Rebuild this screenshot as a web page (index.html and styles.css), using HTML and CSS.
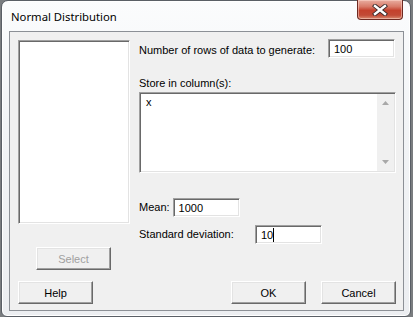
FILE: index.html
```html
<!DOCTYPE html>
<html>
<head>
<meta charset="utf-8">
<link rel="stylesheet" href="styles.css">
</head>
<body>
<div class="window">
  <div class="titlebar">
    <span class="title">Normal Distribution</span>
    <div class="close">
      <svg width="18" height="12" viewBox="0 0 18 12">
        <path d="M4 2 L14 10 M14 2 L4 10" stroke="#3a2a2a" stroke-width="4.2" stroke-linecap="square"/>
        <path d="M4 2 L14 10 M14 2 L4 10" stroke="#ffffff" stroke-width="2.4" stroke-linecap="square"/>
      </svg>
    </div>
  </div>
  <div class="client">
    <div class="main">
      <div class="leftcol">
        <div class="listbox"></div>
        <div class="btn select disabled">Select</div>
      </div>
      <div class="rightcol">
        <div class="row rows">
          <span class="lbl">Number of rows of data to generate:</span>
          <div class="field w67">100</div>
        </div>
        <div class="lbl storelbl">Store in column(s):</div>
        <div class="textarea">
          <div class="tacontent">x</div>
          <div class="scroll">
            <svg width="7" height="4" viewBox="0 0 7 4"><path d="M0 4 L3.5 0 L7 4 Z" fill="#a8a8a8"/></svg>
            <svg width="7" height="4" viewBox="0 0 7 4"><path d="M0 0 L3.5 4 L7 0 Z" fill="#a8a8a8"/></svg>
          </div>
        </div>
        <div class="row mean">
          <span class="lbl">Mean:</span>
          <div class="field w67">1000</div>
        </div>
        <div class="row std">
          <span class="lbl stdlbl">Standard deviation:</span>
          <div class="field w67 sh">10<span class="caret"></span></div>
        </div>
      </div>
    </div>
    <div class="bottom">
      <div class="btn help">Help</div>
      <div class="spacer"></div>
      <div class="btn ok">OK</div>
      <div class="btn cancel">Cancel</div>
    </div>
  </div>
</div>
</body>
</html>
```
FILE: styles.css
```css
html, body {
  margin: 0;
  padding: 0;
}
body {
  width: 413px;
  height: 317px;
  background: #7a7d80;
  overflow: hidden;
  font-family: "Liberation Sans", Arial, sans-serif;
}
.window {
  box-sizing: border-box;
  margin-left: 1px;
  width: 410px;
  height: 317px;
  border: 1px solid #5a5f66;
  border-radius: 7px 7px 6px 6px;
  background: linear-gradient(180deg, #fbfcfd 0%, #f2f4f6 40%, #eceef1 100%);
  box-shadow: inset 0 0 0 1px #ffffff;
  display: flex;
  flex-direction: column;
}
.titlebar {
  height: 30px;
  display: flex;
  align-items: flex-start;
  position: relative;
}
.title {
  font-family: "Noto Sans", "Open Sans", sans-serif;
  font-size: 11.3px;
  color: #000;
  margin-left: 9px;
  margin-top: 8px;
  text-shadow: 0 0 6px #fff, 0 0 3px #fff;
}
.close {
  position: absolute;
  left: 355px;
  top: -1px;
  width: 46px;
  height: 20px;
  box-sizing: border-box;
  border: 1px solid #6e2a22;
  border-top: none;
  border-radius: 0 0 4px 4px;
  background: linear-gradient(180deg, #e9aea1 0%, #d87a68 35%, #c4412d 55%, #c24a36 80%, #d98a70 100%);
  box-shadow: inset 0 0 0 1px rgba(255,220,210,0.5);
  display: flex;
  align-items: center;
  justify-content: center;
}
.client {
  box-sizing: border-box;
  margin-left: 7px;
  width: 395px;
  height: 280px;
  border: 1px solid #8c9096;
  background: #f0f0f0;
  padding: 8px 7px 6px 8px;
  display: flex;
  flex-direction: column;
  font-size: 11px;
  color: #000;
}
.lbl {
  white-space: nowrap;
  line-height: 13px;
}
.main {
  display: flex;
  gap: 9px;
  height: 239px;
}
.leftcol {
  width: 112px;
  display: flex;
  flex-direction: column;
}
.listbox {
  box-sizing: border-box;
  height: 184px;
  background: #fff;
  border-top: 1px solid #a0a0a0;
  border-left: 1px solid #a0a0a0;
  border-right: 1px solid #fff;
  border-bottom: 1px solid #fff;
  box-shadow: inset 1px 1px 0 #696969, inset -1px -1px 0 #e3e3e3;
}
.btn {
  box-sizing: border-box;
  width: 75px;
  height: 23px;
  display: flex;
  align-items: center;
  justify-content: center;
  background: #f0f0f0;
  border-top: 1px solid #ffffff;
  border-left: 1px solid #ffffff;
  border-right: 1px solid #696969;
  border-bottom: 1px solid #696969;
  box-shadow: inset -1px -1px 0 #a0a0a0, inset 1px 1px 0 #e3e3e3;
  font-size: 11px;
}
.select {
  margin-top: 23px;
  margin-left: 18px;
}
.disabled {
  color: #a0a0a0;
}
.rightcol {
  flex: 1;
  display: flex;
  flex-direction: column;
}
.row {
  display: flex;
  align-items: center;
}
.field {
  box-sizing: border-box;
  height: 19px;
  background: #fff;
  border-top: 1px solid #a0a0a0;
  border-left: 1px solid #a0a0a0;
  border-right: 1px solid #fff;
  border-bottom: 1px solid #fff;
  box-shadow: inset 1px 1px 0 #696969, inset -1px -1px 0 #e3e3e3;
  padding: 3px 0 0 5px;
  font-size: 11px;
  line-height: 13px;
  display: flex;
  align-items: flex-start;
}
.w67 {
  width: 67px;
}
.sh {
  height: 19px;
}
.caret {
  display: inline-block;
  width: 1px;
  height: 14px;
  background: #000;
  margin-top: -1px;
}
.rows {
  height: 19px;
  margin-top: -1px;
}
.rows .lbl {
  margin-top: 3px;
}
.rows .field {
  margin-left: auto;
  margin-right: 1px;
}
.storelbl {
  margin-top: 19px;
  height: 13px;
}
.textarea {
  box-sizing: border-box;
  margin-top: 2px;
  width: 257px;
  height: 81px;
  background: #fff;
  border-top: 1px solid #a0a0a0;
  border-left: 1px solid #a0a0a0;
  border-right: 1px solid #fff;
  border-bottom: 1px solid #fff;
  box-shadow: inset 1px 1px 0 #696969, inset -1px -1px 0 #e3e3e3;
  display: flex;
  padding: 1px 1px 1px 1px;
}
.tacontent {
  flex: 1;
  padding: 2px 0 0 5px;
  line-height: 13px;
}
.scroll {
  width: 17px;
  background: #f0f0f0;
  display: flex;
  flex-direction: column;
  justify-content: space-between;
  align-items: center;
  padding: 7px 0 7px 0;
}
.mean {
  margin-top: 25px;
}
.mean .field {
  margin-left: 3px;
}
.std {
  margin-top: 8px;
}
.stdlbl {
  width: 116px;
}
.bottom {
  display: flex;
  margin-top: 3px;
}
.spacer {
  flex: 1;
}
.cancel {
  margin-left: 15px;
  margin-right: 0;
}
```
